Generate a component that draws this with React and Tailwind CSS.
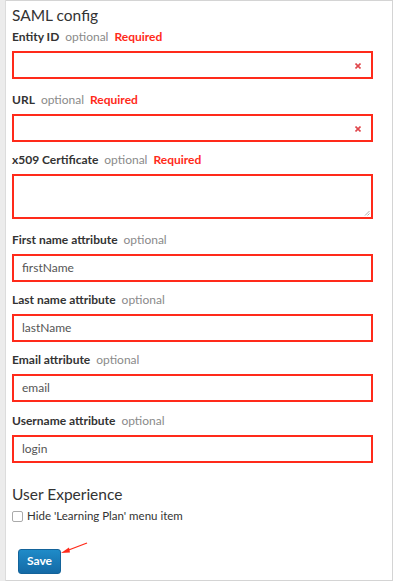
import React from "react";

function Label({ name, required }) {
  return (
    <div className="flex items-center h-[16px] text-[12px] leading-[16px] whitespace-nowrap">
      <span className="font-bold text-[#333]">{name}</span>
      <span className="ml-[6px] text-[#8a8a8a]">optional</span>
      {required && <span className="ml-[6px] font-bold text-[#ff2a1a]">Required</span>}
    </div>
  );
}

function Field({ name, required, value, clear, mt }) {
  return (
    <div className={mt}>
      <Label name={name} required={required} />
      <div className="mt-[6px] relative h-[28px] w-[361px] border-2 border-[#ff2a1a] bg-white flex items-center pl-[8px] text-[12px] text-[#555]">
        {value}
        {clear && (
          <svg className="absolute right-[10px] top-[10px]" width="6" height="6" viewBox="0 0 6 6">
            <path d="M0.5 0.5L5.5 5.5M5.5 0.5L0.5 5.5" stroke="#e0474c" strokeWidth="1.6" />
          </svg>
        )}
      </div>
    </div>
  );
}

export default function App() {
  return (
    <div className="w-[394px] h-[581px] bg-white flex" style={{ fontFamily: "Lato, 'Open Sans', sans-serif" }}>
      <div className="w-[6px] bg-[#ececec] border-r border-[#dcdcdc]" />
      <div className="w-[387px] h-[581px] border-t border-r border-b border-[#d4d4d4] pl-[6px] relative">
        <div className="mt-[3px] h-[22px] text-[15.5px] leading-[22px] text-[#333]">SAML config</div>
        <Field name="Entity ID" required clear mt="mt-[3px]" />
        <Field name="URL" required clear mt="mt-[13px]" />
        <div className="mt-[10px]">
          <Label name="x509 Certificate" required />
          <div className="mt-[6px] relative h-[45px] w-[361px] border-2 border-[#ff2a1a] bg-white">
            <svg className="absolute right-[1px] bottom-[1px]" width="6" height="6" viewBox="0 0 6 6">
              <path d="M5.5 1L1 5.5M5.5 3.5L3.5 5.5" stroke="#999" strokeWidth="0.8" />
            </svg>
          </div>
        </div>
        <Field name="First name attribute" value="firstName" mt="mt-[13px]" />
        <Field name="Last name attribute" value="lastName" mt="mt-[10px]" />
        <Field name="Email attribute" value="email" mt="mt-[10px]" />
        <Field name="Username attribute" value="login" mt="mt-[11px]" />
        <div className="mt-[20px] h-[22px] text-[15.5px] leading-[22px] text-[#333]">User Experience</div>
        <div className="mt-[3px] flex items-center h-[16px] text-[11.5px] text-[#333]">
          <span className="w-[11px] h-[11px] border border-[#aaa] rounded-[2px] bg-white mr-[4px]" />
          Hide 'Learning Plan' menu item
        </div>
        <div className="mt-[23px] ml-[6px] relative w-[43px]">
          <button className="w-[43px] h-[25px] rounded-[3px] border border-[#13639a] bg-gradient-to-b from-[#1f8bc8] to-[#146aa6] text-white text-[12px] font-bold">
            Save
          </button>
          <svg className="absolute left-[42px] top-[-5px]" width="30" height="14" viewBox="0 0 30 14">
            <path d="M27 1L6 9" stroke="#ff2a1a" strokeWidth="1.3" />
            <path d="M1 11L9 5.5L10 10.5Z" fill="#ff2a1a" />
          </svg>
        </div>
      </div>
    </div>
  );
}
